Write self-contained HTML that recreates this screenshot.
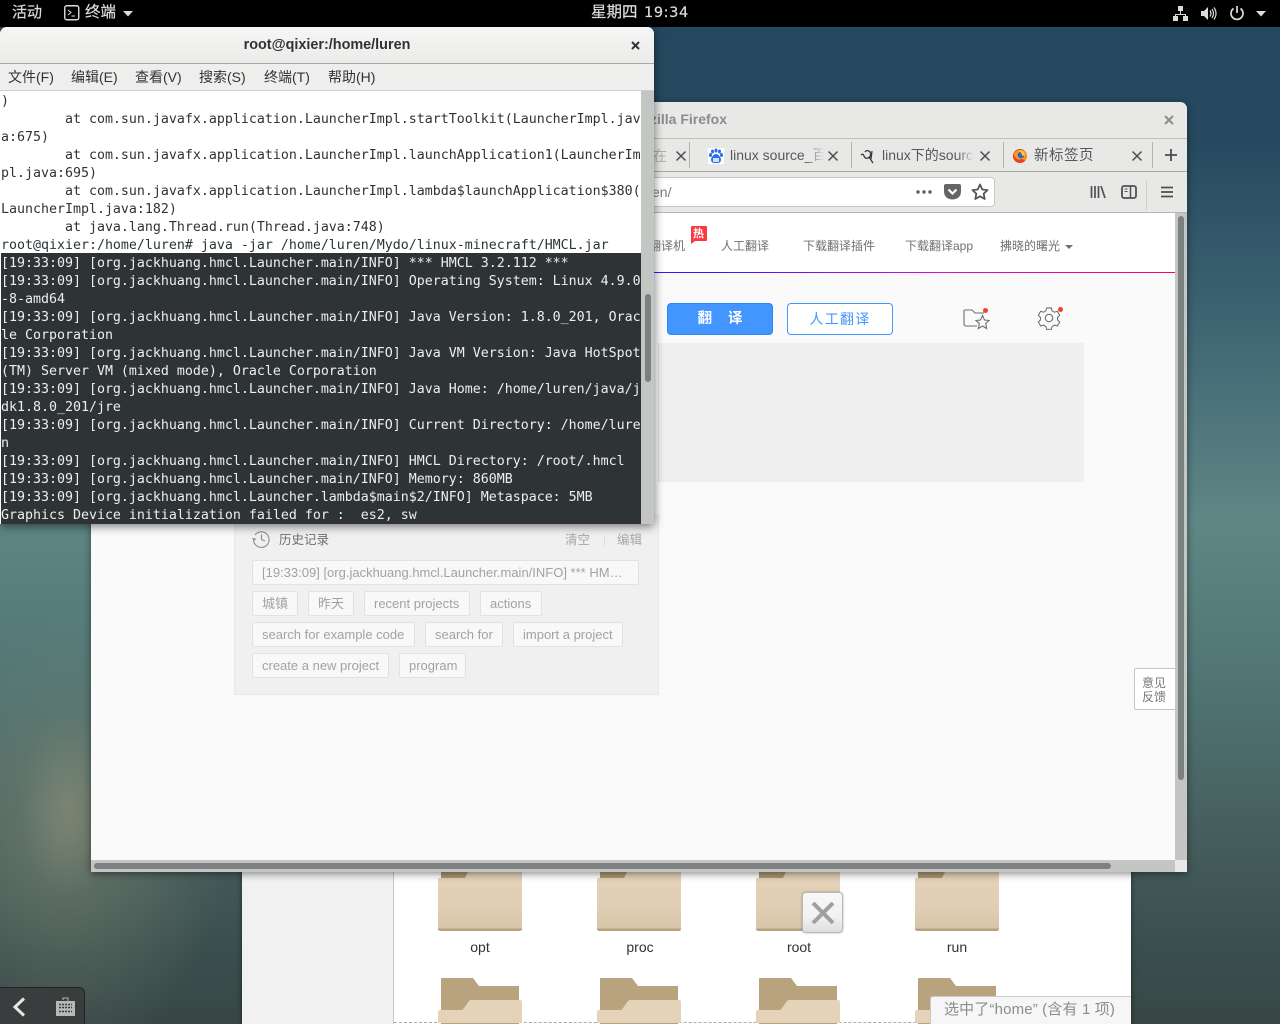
<!DOCTYPE html>
<html lang="zh"><head><meta charset="utf-8"><title>root@qixier</title>
<style>
*{box-sizing:border-box}
html,body{margin:0;padding:0;width:1280px;height:1024px;overflow:hidden;background:#3d5557}
body{position:relative;font-family:"Liberation Sans","Noto Sans CJK SC",sans-serif}
.a{position:absolute}
.t{position:absolute;white-space:nowrap}
#bg{left:0;top:0;width:1280px;height:1024px;background:
radial-gradient(ellipse 48px 90px at 68px 805px,rgba(150,150,125,.42),rgba(150,150,125,0) 100%),
radial-gradient(ellipse 165px 225px at 65px 835px,rgba(125,135,115,.62),rgba(125,135,115,0) 100%),
linear-gradient(180deg,#24485f 0,#26495f 140px,#3a6170 300px,#5f8785 520px,#507574 680px,#47605f 820px,#3a4e4d 950px,#384746 1024px)}
#top{left:0;top:0;width:1280px;height:27px;background:#000;color:#dcdcdc;font-size:15px}
#top .t{top:4px;line-height:18px;-webkit-text-stroke:.2px #dcdcdc}
#term{left:0;top:27px;width:654px;height:497px;background:#fff;border-radius:7px 7px 0 0;box-shadow:0 2px 10px rgba(0,0,0,.55);overflow:hidden}
#tt{left:0;top:0;width:654px;height:37px;background:linear-gradient(#f6f6f5,#ebebea);border-bottom:1px solid #a8a8a4;text-align:center;font-size:14.4px;font-weight:700;color:#2e3436;line-height:37px}
#mb{left:0;top:37px;width:654px;height:27px;background:#eeeeec;border-bottom:1px solid #cfcfcd;font-size:14px;color:#2e3436}
#mb .t{top:4px;line-height:19px}
#sb{left:641px;top:64px;width:13px;height:433px;background:#c4c6c4}
#th{left:645px;top:267px;width:6px;height:88px;background:#7c8080;border-radius:3px;position:absolute}
pre{margin:0;position:relative;top:2px;font-family:"DejaVu Sans Mono","Liberation Mono",monospace;font-size:13.3px;line-height:18px;color:#2e3436;letter-spacing:-.01px}
#tx{left:1px;top:64px;width:640px;height:162px;overflow:hidden}
#sel{left:1px;top:226px;width:640px;height:271px;background:#2e3436;overflow:hidden;padding-left:0}
#sel pre{color:#eeeeec}
#ff{left:91px;top:102px;width:1096px;height:770px;background:#e8e8e7;border-radius:7px 7px 0 0;box-shadow:0 2px 8px rgba(0,0,0,.45);overflow:hidden}
#ftitle{left:0;top:0;width:1096px;height:37px;background:#e8e8e7;border-bottom:1px solid #c0c0be;font-size:14px;font-weight:700;color:#8a8c8c}
.tab{position:absolute;top:13px;line-height:18px;font-size:14px;color:#56595a;white-space:nowrap;overflow:hidden}
.tb{position:absolute;top:40px;width:1px;height:26px;background:#b2b2b0}
.fade{position:absolute;top:0;right:0;width:18px;height:100%;background:linear-gradient(90deg,rgba(232,232,231,0),#e8e8e7)}
#cnt{left:0;top:111px;width:1084px;height:647px;background:#fafafa;position:absolute}
#hdr{left:0;top:0;width:1084px;height:59px;background:#fff}
#grad{left:0;top:59px;width:1084px;height:1px;background:linear-gradient(90deg,#2b1cff 0,#3a16ff 58%,#d40cdd 78%,#ff0068 100%)}
.nav{position:absolute;top:25px;font-size:12px;line-height:17px;color:#6f6f6f;white-space:nowrap}
.chip{position:absolute;height:25px;background:#f8f8f8;border:1px solid #e2e2e2;border-radius:2px;font-size:13px;line-height:23px;color:#a2a2a2;padding:0 0 0 9px;white-space:nowrap;overflow:hidden}
#fm{left:242px;top:860px;width:889px;height:164px;background:#fff;box-shadow:0 0 5px rgba(0,0,0,.5)}
.folder{position:absolute;width:84px}
</style></head><body>
<div class="a" id="bg"></div>

<div class="a" id="top">
<span class="t" style="left:12px">活动</span>
<svg class="a" style="left:64px;top:5px" width="16" height="16"><rect x=".75" y=".75" width="14" height="14" rx="2" fill="none" stroke="#dcdcdc" stroke-width="1.4"/><path d="M4 5l3 2.500-3 2.500M7.500 11h3.500" stroke="#dcdcdc" fill="none"/></svg>
<span class="t" style="left:85px;font-size:15.500px">终端</span>
<svg class="a" style="left:123px;top:11px" width="10" height="6"><path d="M0 0h10L5 5.500z" fill="#dcdcdc"/></svg>
<span class="t" style="left:591px;font-size:15.500px">星期四</span>
<span class="t" style="left:644px;font-family:'DejaVu Sans',sans-serif;font-size:14.500px;letter-spacing:.6px">19:34</span>
<svg class="a" style="left:1173px;top:6px" width="15" height="15" fill="#dcdcdc"><rect x="5" y="0" width="5" height="5"/><rect x="0" y="10" width="5" height="5"/><rect x="10" y="10" width="5" height="5"/><path d="M7 5h1v3h5v2h-1V9H3v1H2V8h5z"/></svg>
<svg class="a" style="left:1201px;top:6px" width="16" height="15"><path d="M0 5h3l4-4v13l-4-4H0z" fill="#dcdcdc"/><path d="M9 4.500q2 3 0 6M11 3q3 4.500 0 9M13 1.500q4 6 0 12" stroke="#dcdcdc" fill="none" stroke-width="1.200"/></svg>
<svg class="a" style="left:1229px;top:5px" width="16" height="16"><path d="M4.500 3.500a6 6 0 1 0 7 0" stroke="#dcdcdc" fill="none" stroke-width="1.700"/><path d="M8 1v7" stroke="#dcdcdc" stroke-width="1.700"/></svg>
<svg class="a" style="left:1256px;top:11px" width="10" height="6"><path d="M0 0h10L5 5.500z" fill="#dcdcdc"/></svg>
</div>

<div class="a" id="fm">
<div class="a" style="left:0;top:0;width:152px;height:164px;background:#f1f1f1;border-right:1px solid #c8c8c8"></div>
<div class="a" style="left:152px;top:162px;width:737px;height:0;border-top:1px dashed #aaa"></div>

<svg width="0" height="0" style="position:absolute"><defs><linearGradient id="fg" x1="0" y1="0" x2="0" y2="1"><stop offset="0" stop-color="#e3d2b8"/><stop offset=".6" stop-color="#e1cfb5"/><stop offset="1" stop-color="#d6c4a8"/></linearGradient></defs></svg>
<svg class="folder" style="left:196px;top:12px" height="60" viewBox="0 0 84 60"><path d="M0 7q0-1 1-1h25l3-6h55v56q0 3-3 3H3q-3 0-3-3z" fill="url(#fg)"/><path d="M3 0h27l-3 6H3z" fill="#ac9672"/><path d="M0 56.500h84v.5q0 2-3 2H3q-3 0-3-2z" fill="#b8a27e"/></svg>
<svg class="folder" style="left:355px;top:12px" height="60" viewBox="0 0 84 60"><path d="M0 7q0-1 1-1h25l3-6h55v56q0 3-3 3H3q-3 0-3-3z" fill="url(#fg)"/><path d="M3 0h27l-3 6H3z" fill="#ac9672"/><path d="M0 56.500h84v.5q0 2-3 2H3q-3 0-3-2z" fill="#b8a27e"/></svg>
<svg class="folder" style="left:514px;top:12px" height="60" viewBox="0 0 84 60"><path d="M0 7q0-1 1-1h25l3-6h55v56q0 3-3 3H3q-3 0-3-3z" fill="url(#fg)"/><path d="M3 0h27l-3 6H3z" fill="#ac9672"/><path d="M0 56.500h84v.5q0 2-3 2H3q-3 0-3-2z" fill="#b8a27e"/></svg>
<svg class="folder" style="left:673px;top:12px" height="60" viewBox="0 0 84 60"><path d="M0 7q0-1 1-1h25l3-6h55v56q0 3-3 3H3q-3 0-3-3z" fill="url(#fg)"/><path d="M3 0h27l-3 6H3z" fill="#ac9672"/><path d="M0 56.500h84v.5q0 2-3 2H3q-3 0-3-2z" fill="#b8a27e"/></svg>

<span class="t" style="left:198px;width:80px;text-align:center;top:79px;font-size:14px;line-height:16px;color:#2e3436">opt</span>
<span class="t" style="left:358px;width:80px;text-align:center;top:79px;font-size:14px;line-height:16px;color:#2e3436">proc</span>
<span class="t" style="left:517px;width:80px;text-align:center;top:79px;font-size:14px;line-height:16px;color:#2e3436">root</span>
<span class="t" style="left:675px;width:80px;text-align:center;top:79px;font-size:14px;line-height:16px;color:#2e3436">run</span>

<svg class="folder" style="left:196px;top:118px" height="46" viewBox="0 0 84 46"><path d="M3 1q0-1 1-1h31l6 8h40v38H3z" fill="#b9a37f"/><path d="M0 34q0-2 2-2h21q2 0 3-2l5-7q1-1 2-1h49q2 0 2 2v21H0z" fill="#e4d3b9"/></svg>
<svg class="folder" style="left:355px;top:118px" height="46" viewBox="0 0 84 46"><path d="M3 1q0-1 1-1h31l6 8h40v38H3z" fill="#b9a37f"/><path d="M0 34q0-2 2-2h21q2 0 3-2l5-7q1-1 2-1h49q2 0 2 2v21H0z" fill="#e4d3b9"/></svg>
<svg class="folder" style="left:514px;top:118px" height="46" viewBox="0 0 84 46"><path d="M3 1q0-1 1-1h31l6 8h40v38H3z" fill="#b9a37f"/><path d="M0 34q0-2 2-2h21q2 0 3-2l5-7q1-1 2-1h49q2 0 2 2v21H0z" fill="#e4d3b9"/></svg>
<svg class="folder" style="left:673px;top:118px" height="46" viewBox="0 0 84 46"><path d="M3 1q0-1 1-1h31l6 8h40v38H3z" fill="#b9a37f"/><path d="M0 34q0-2 2-2h21q2 0 3-2l5-7q1-1 2-1h49q2 0 2 2v21H0z" fill="#e4d3b9"/></svg>

<div class="a" style="left:560px;top:32px;width:41px;height:41px;background:linear-gradient(#f8f8f8,#f2f2f2 60%,#dedede);border:1px solid #b8b8b8;border-radius:4px;box-shadow:0 0 2px rgba(0,0,0,.3)">
<svg class="a" style="left:8px;top:9px" width="24" height="22"><path d="M2 1l20 20M22 1L2 21" stroke="#a0a0a0" stroke-width="4"/></svg></div>
<div class="a" style="left:688px;top:136px;width:201px;height:28px;background:#f6f6f6;border:1px solid #c9c9c9;border-right:none;border-bottom:none;border-radius:3px 0 0 0"></div>
<span class="t" style="left:702px;top:141px;font-size:15px;line-height:18px;color:#8b8d8d;letter-spacing:.15px">选中了“home” (含有 1 项)</span>
</div>

<div class="a" id="ff">
<div class="a" id="ftitle"><span class="t" style="left:559px;top:8px;line-height:18px">zilla Firefox</span></div>
<svg class="a" style="left:1073px;top:13px" width="10" height="10"><path d="M1 1l8 8M9 1L1 9" stroke="#8c8e8e" stroke-width="2"/></svg>

<div class="tb" style="left:598px"></div><div class="tb" style="left:760px"></div><div class="tb" style="left:912px"></div><div class="tb" style="left:1061px"></div>
<div class="a" style="left:0;top:69px;width:1096px;height:1px;background:#a8a8a6"></div>

<span class="t" style="left:562px;top:45px;font-size:14px;line-height:18px;color:#b0b0ae">在</span>
<svg class="a" style="left:584px;top:48px" width="12" height="12"><path d="M1.500 1.500l9 9M10.500 1.500l-9 9" stroke="#4a4d4e" stroke-width="1.500"/></svg>
<svg class="a" style="left:617px;top:46px" width="16" height="16"><rect width="16" height="16" fill="#fff"/><g fill="#2b6de8"><ellipse cx="4.500" cy="3.500" rx="1.500" ry="2"/><ellipse cx="8" cy="2.500" rx="1.500" ry="2"/><ellipse cx="11.500" cy="3.500" rx="1.500" ry="2"/><ellipse cx="2.500" cy="7" rx="1.500" ry="2"/><ellipse cx="13.500" cy="7" rx="1.500" ry="2"/><path d="M8 6q3 0 5 5 0 4-3 4H6q-3 0-3-4 2-5 5-5z"/></g><rect x="5" y="10" width="6" height="4" fill="#cfe0fb"/></svg>
<div class="tab" style="left:639px;top:44px;width:94px">linux source_百度<div class="fade"></div></div>
<svg class="a" style="left:736px;top:48px" width="12" height="12"><path d="M1.500 1.500l9 9M10.500 1.500l-9 9" stroke="#4a4d4e" stroke-width="1.500"/></svg>
<svg class="a" style="left:769px;top:46px" width="16" height="16"><path d="M1 7q2-2 3 1 1 3 4 2 4-2 2-6-3-3-5 0M9 9l4 6M12 3l-1 8" stroke="#3b3b3b" fill="none" stroke-width="1.300"/></svg>
<div class="tab" style="left:791px;top:44px;width:93px">linux下的source<div class="fade"></div></div>
<svg class="a" style="left:888px;top:48px" width="12" height="12"><path d="M1.500 1.500l9 9M10.500 1.500l-9 9" stroke="#4a4d4e" stroke-width="1.500"/></svg>
<svg class="a" style="left:921px;top:46px" width="16" height="16" viewBox="0 0 17 16"><circle cx="8.500" cy="8" r="7.500" fill="#e8402a"/><path d="M2 5q5-6 12-2 4 5 0 10-3-3-6-1-6-1-6-7z" fill="#f59a1c"/><circle cx="9.500" cy="7" r="3.500" fill="#3b5fc4"/><path d="M7 2l5 1 2 4-3 1-1-3z" fill="#f9d030"/></svg>
<span class="t" style="left:943px;top:45px;font-size:14.500px;line-height:18px;color:#56595a;letter-spacing:.5px">新标签页</span>
<svg class="a" style="left:1040px;top:48px" width="12" height="12"><path d="M1.500 1.500l9 9M10.500 1.500l-9 9" stroke="#4a4d4e" stroke-width="1.500"/></svg>
<svg class="a" style="left:1073px;top:46px" width="14" height="14"><path d="M7 1v12M1 7h12" stroke="#4a4d4e" stroke-width="1.800"/></svg>

<div class="a" style="left:400px;top:75px;width:504px;height:30px;background:#fff;border:1px solid #c8c8c6;border-radius:4px"></div>
<span class="t" style="left:561px;top:81px;font-size:14px;line-height:18px;color:#7e8080">en/</span>
<svg class="a" style="left:824px;top:87px" width="18" height="6" fill="#5a5c5c"><circle cx="3" cy="3" r="1.700"/><circle cx="9" cy="3" r="1.700"/><circle cx="15" cy="3" r="1.700"/></svg>
<svg class="a" style="left:853px;top:82px" width="17" height="16"><path d="M2 0h13q2 0 2 2v5q0 8-8.500 8.500Q0 15 0 7V2q0-2 2-2z" fill="#636566"/><path d="M4.500 5.500l4 4 4-4" stroke="#fff" stroke-width="2.200" fill="none"/></svg>
<svg class="a" style="left:880px;top:81px" width="18" height="18"><path d="M9 1.500l2.300 5 5.200.6-3.800 3.600 1 5.300L9 13.300 4.300 16l1-5.300L1.500 7.100l5.200-.6z" fill="none" stroke="#555758" stroke-width="1.800" stroke-linejoin="round"/></svg>
<svg class="a" style="left:999px;top:82px" width="16" height="16"><path d="M1.500 2v12M5 2v12M8.500 2v12M11 2l4 12" stroke="#4f5152" stroke-width="1.700" fill="none"/></svg>
<svg class="a" style="left:1030px;top:82px" width="16" height="16"><rect x="1" y="2" width="14" height="12" rx="2" fill="none" stroke="#4f5152" stroke-width="1.800"/><path d="M9.500 2v12" stroke="#4f5152" stroke-width="1.500"/><path d="M3.500 5h3M3.500 7.500h3" stroke="#4f5152"/></svg>
<div class="a" style="left:1055px;top:78px;width:1px;height:30px;background:#d0d0ce"></div>
<svg class="a" style="left:1070px;top:84px" width="12" height="12"><path d="M0 1.500h12M0 6h12M0 10.500h12" stroke="#4f5152" stroke-width="1.800"/></svg>
<div class="a" style="left:0;top:110px;width:1096px;height:1px;background:#b4b4b2"></div>

<div id="cnt">
<div class="a" id="hdr"></div><div class="a" id="grad"></div>
<span class="nav" style="left:558px">翻译机</span>
<svg class="a" style="left:600px;top:13px" width="16" height="18"><path d="M1 0h14q1 0 1 1v13q0 1-1 1H4l-4 3V1q0-1 1-1z" fill="#f93a3f"/></svg>
<span class="t" style="left:602px;top:15px;font-size:11px;font-weight:700;line-height:12px;color:#fff">热</span>
<span class="nav" style="left:630px">人工翻译</span>
<span class="nav" style="left:712px">下载翻译插件</span>
<span class="nav" style="left:814px">下载翻译app</span>
<span class="nav" style="left:909px">拂晓的曙光</span>
<svg class="a" style="left:974px;top:32px" width="8" height="5"><path d="M0 0h8L4 4z" fill="#6f6f6f"/></svg>

<div class="a" style="left:576px;top:90px;width:106px;height:32px;background:#4395ff;border:1px solid #2d84f5;border-radius:4px;color:#fff;font-size:14.500px;font-weight:700;line-height:30px;text-align:center">翻&nbsp;&nbsp;&nbsp;&nbsp;译</div>
<div class="a" style="left:696px;top:90px;width:106px;height:32px;background:#fff;border:1px solid #4395ff;border-radius:4px;color:#4395ff;font-size:14px;line-height:30px;text-align:center;letter-spacing:1.300px">人工翻译</div>
<svg class="a" style="left:872px;top:93px" width="28" height="26" fill="none" stroke="#6e6e6e" stroke-width="1.100"><path d="M14 20H3q-2 0-2-2V5q0-1 1-1h7l3 3h9"/><path d="M19.500 9.500l2 4.500 4.500.5-3.300 3 .9 5-4.100-2.500-4.100 2.500.9-5-3.300-3 4.500-.5z"/></svg>
<div class="a" style="left:892px;top:95px;width:5px;height:5px;border-radius:50%;background:#f4402e"></div>
<svg class="a" style="left:946px;top:93px" width="24" height="24" fill="none" stroke="#6e6e6e" stroke-width="1.100"><circle cx="12" cy="12" r="3.700"/><path d="M9.500 1.500h5l.7 3 2.600 1.500 3-1 2.400 4.300-2.200 2.100v2.800l2.200 2.100-2.400 4.200-3-.9-2.600 1.500-.7 3h-5l-.7-3-2.600-1.500-3 .9L.8 16.300 3 14.200v-2.800L.8 9.300 3.200 5l3 1 2.600-1.500z" transform="translate(.6 .5) scale(.95)"/></svg>
<div class="a" style="left:967px;top:94px;width:5px;height:5px;border-radius:50%;background:#f4402e"></div>

<div class="a" style="left:567px;top:130px;width:426px;height:139px;background:#efefef;border-left:1px solid #dedede"></div>
<div class="a" style="left:143px;top:301px;width:425px;height:181px;background:#f0f0f0;border:1px solid #e8e8e8;border-top:none"></div>

<svg class="a" style="left:161px;top:317px" width="18" height="18" fill="none" stroke="#8c8c8c" stroke-width="1.100"><path d="M3 5a7.800 7.800 0 1 1-1.500 5M9.500 4.500v5l3.500 1.500"/><path d="M0 8l2 3 2.500-2.500z" fill="#8c8c8c" stroke="none"/></svg>
<span class="t" style="left:188px;top:318px;font-size:12.500px;line-height:18px;color:#6f6f6f">历史记录</span>
<span class="t" style="left:474px;top:318px;font-size:12.500px;line-height:18px;color:#a6a6a6">清空</span>
<div class="a" style="left:513px;top:322px;width:1px;height:11px;background:#ddd"></div>
<span class="t" style="left:526px;top:318px;font-size:12.500px;line-height:18px;color:#a6a6a6">编辑</span>

<div class="chip" style="left:161px;top:347px;width:387px">[19:33:09] [org.jackhuang.hmcl.Launcher.main/INFO] *** HM…</div>
<div class="chip" style="left:161px;top:378px;width:46px">城镇</div>
<div class="chip" style="left:217px;top:378px;width:46px">昨天</div>
<div class="chip" style="left:273px;top:378px;width:106px">recent projects</div>
<div class="chip" style="left:389px;top:378px;width:62px">actions</div>
<div class="chip" style="left:161px;top:409px;width:163px">search for example code</div>
<div class="chip" style="left:334px;top:409px;width:78px">search for</div>
<div class="chip" style="left:422px;top:409px;width:110px">import a project</div>
<div class="chip" style="left:161px;top:440px;width:137px">create a new project</div>
<div class="chip" style="left:308px;top:440px;width:67px">program</div>

<div class="a" style="left:1043px;top:455px;width:41px;height:42px;background:#fff;border:1px solid #c6c6c6;border-right:none;border-radius:2px 0 0 2px;font-size:12px;line-height:14px;color:#777;padding:7px 0 0 7px">意见<br>反馈</div>
</div>

<div class="a" style="left:1084px;top:111px;width:12px;height:647px;background:#c4c6c4"></div>
<div class="a" style="left:1087px;top:114px;width:6px;height:564px;background:#7c8080;border-radius:3px"></div>
<div class="a" style="left:0;top:758px;width:1084px;height:12px;background:#c4c6c4"></div>
<div class="a" style="left:3px;top:761px;width:1017px;height:6px;background:#7c8080;border-radius:3px"></div>
<div class="a" style="left:1084px;top:758px;width:12px;height:12px;background:#e8e8e7"></div>
</div>

<div class="a" id="term">
<div class="a" id="tt">root@qixier:/home/luren</div>
<svg class="a" style="left:631px;top:14px" width="9" height="9"><path d="M1 1l7 7M8 1L1 8" stroke="#2e3436" stroke-width="2"/></svg>
<div class="a" id="mb">
<span class="t" style="left:8px">文件(F)</span><span class="t" style="left:71px">编辑(E)</span><span class="t" style="left:135px">查看(V)</span><span class="t" style="left:199px">搜索(S)</span><span class="t" style="left:264px">终端(T)</span><span class="t" style="left:328px">帮助(H)</span>
</div>
<div class="a" id="tx"><pre>)
        at com.sun.javafx.application.LauncherImpl.startToolkit(LauncherImpl.jav
a:675)
        at com.sun.javafx.application.LauncherImpl.launchApplication1(LauncherIm
pl.java:695)
        at com.sun.javafx.application.LauncherImpl.lambda$launchApplication$380(
LauncherImpl.java:182)
        at java.lang.Thread.run(Thread.java:748)
root@qixier:/home/luren# java -jar /home/luren/Mydo/linux-minecraft/HMCL.jar</pre></div>
<div class="a" id="sel"><pre>[19:33:09] [org.jackhuang.hmcl.Launcher.main/INFO] *** HMCL 3.2.112 ***
[19:33:09] [org.jackhuang.hmcl.Launcher.main/INFO] Operating System: Linux 4.9.0
-8-amd64
[19:33:09] [org.jackhuang.hmcl.Launcher.main/INFO] Java Version: 1.8.0_201, Orac
le Corporation
[19:33:09] [org.jackhuang.hmcl.Launcher.main/INFO] Java VM Version: Java HotSpot
(TM) Server VM (mixed mode), Oracle Corporation
[19:33:09] [org.jackhuang.hmcl.Launcher.main/INFO] Java Home: /home/luren/java/j
dk1.8.0_201/jre
[19:33:09] [org.jackhuang.hmcl.Launcher.main/INFO] Current Directory: /home/lure
n
[19:33:09] [org.jackhuang.hmcl.Launcher.main/INFO] HMCL Directory: /root/.hmcl
[19:33:09] [org.jackhuang.hmcl.Launcher.main/INFO] Memory: 860MB
[19:33:09] [org.jackhuang.hmcl.Launcher.lambda$main$2/INFO] Metaspace: 5MB
Graphics Device initialization failed for :  es2, sw</pre></div>
<div class="a" id="sb"></div>
<div id="th"></div>
</div>

<div class="a" style="left:0;top:987px;width:85px;height:37px;background:#3a3d3d;border:1px solid #222;border-left:none;border-bottom:none;border-radius:0 6px 0 0">
<svg class="a" style="left:12px;top:9px" width="14" height="20"><path d="M12 1.500L3 10l9 8.500" stroke="#e6e6e6" stroke-width="3" fill="none"/></svg>
<svg class="a" style="left:56px;top:9px" width="20" height="20" fill="none"><path d="M7 3V1h5v3" stroke="#b8b8b8"/><rect x=".5" y="4.500" width="18" height="14" fill="#b8b8b8" stroke="#b8b8b8"/><path d="M3 7.500h13M3 10.500h13M3 14.500h13" stroke="#3a3d3d" stroke-width="1.500" stroke-dasharray="2 1"/></svg>
</div>
</body></html>
